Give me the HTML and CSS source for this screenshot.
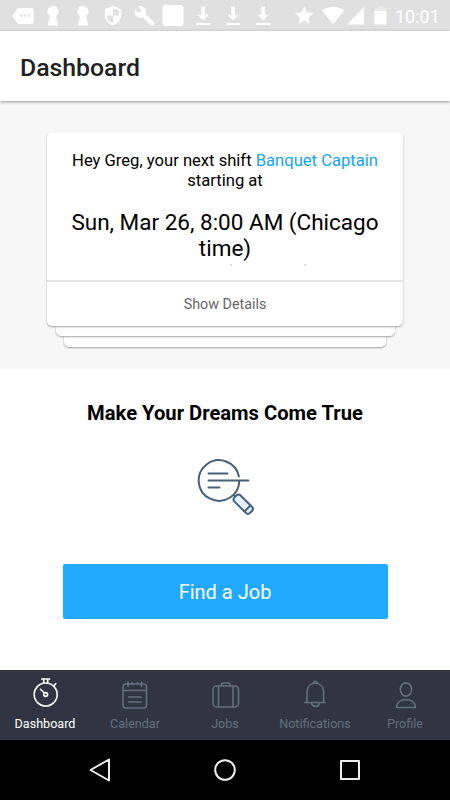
FILE: index.html
```html
<!DOCTYPE html>
<html lang="en">
<head>
  <meta charset="UTF-8">
  <meta name="viewport" content="width=device-width, initial-scale=1.0">
  <title>Dashboard</title>
  <link rel="stylesheet" href="styles.css">
</head>
<body>
  <div class="status-bar">
    <div class="status-left">
      <svg viewBox="0 0 30 31"><path fill-rule="evenodd" d="M11 8h13q1.500 0 1.500 1.500v13q0 1.500-1.500 1.500H11q-1 0-1.700-1L4.500 16l4.800-7q.7-1 1.700-1zM12 14.500v2.200h2.200v-2.200zM15.800 14.500v2.200h2.200v-2.200zM19.600 14.500v2.200h2.200v-2.200z"/></svg>
      <svg viewBox="0 0 30 31"><path d="M15 6a5.400 5.400 0 0 1 3 9.900L20.200 25.500H9.600L12 15.900A5.400 5.400 0 0 1 15 6z"/></svg>
      <svg viewBox="0 0 30 31"><path d="M15 6a5.400 5.400 0 0 1 3 9.900L20.200 25.500H9.600L12 15.900A5.400 5.400 0 0 1 15 6z"/></svg>
      <svg viewBox="0 0 30 31"><path fill-rule="evenodd" d="M15 6l8.200 3v6c0 5-3.400 8.900-8.200 10.300C10.200 23.900 6.800 20 6.800 15V9zM15 8.300v7.200H8.800c.3 3.800 2.700 6.700 6.200 7.700v-7.700h6.200v-5z"/></svg>
      <svg viewBox="0 0 30 31"><path d="M26.300 22.500l-8.500-8.500c.9-2.200.4-4.700-1.400-6.400-1.800-1.800-4.500-2.100-6.600-1.100l3.900 3.900-2.700 2.700-4-3.900c-1 2.200-.5 4.900 1.300 6.700 1.800 1.700 4.200 2.200 6.400 1.300l8.500 8.600c.4.400 1 .4 1.400 0l1.900-1.900c.4-.4.3-1.100-.2-1.400z"/></svg>
      <svg viewBox="0 0 30 31"><rect x="4.500" y="5" width="21" height="21" rx="3"/></svg>
      <svg viewBox="0 0 30 31"><path d="M13.300 6.500h3.600v8.300h3.800L15.100 20.500l-5.600-5.700h3.800zM8.300 23h14v2h-14z"/></svg>
      <svg viewBox="0 0 30 31"><path d="M13.300 6.500h3.600v8.300h3.800L15.100 20.500l-5.600-5.700h3.800zM8.300 23h14v2h-14z"/></svg>
      <svg viewBox="0 0 30 31"><path d="M13.300 6.500h3.600v8.300h3.800L15.100 20.500l-5.600-5.700h3.800zM8.300 23h14v2h-14z"/></svg>
    </div>
    <svg class="status-right" viewBox="0 0 100 31">
      <path d="M14.200 6.300l2.600 6.100 6.600.6-5 4.400 1.500 6.500-5.700-3.500-5.700 3.500L10 17.400 5 13l6.600-.6z"/>
      <path d="M32 10.500c6.500-4.900 15.700-4.900 22.200 0L43.100 24.300z"/>
      <path d="M74 7v17.500H57z"/>
      <path fill-opacity=".35" d="M84.500 11V8h3V6.300h6V8h3v3z"/>
      <path d="M84.500 11h12v12.500q0 1-1 1h-10q-1 0-1-1z"/>
    </svg>
    <span class="clock">10:01</span>
  </div>

  <header class="header">
    <h1>Dashboard</h1>
  </header>

  <section class="shifts">
    <div class="card">
      <div class="card-body">
        <p class="greeting">Hey Greg, your next shift <a>Banquet Captain</a><br>starting at</p>
        <p class="shift-time">Sun, Mar 26, 8:00 AM (Chicago<br>time)</p>
        <svg class="clipped" viewBox="0 0 356 4"><path d="M183 2.500l2-1M257 2.500l2-1"/></svg>
      </div>
      <div class="card-footer">Show Details</div>
    </div>
    <div class="card-edge"></div>
    <div class="card-edge last"></div>
  </section>

  <main class="find">
    <h2>Make Your Dreams Come True</h2>
    <svg class="search-icon" viewBox="0 0 60 60">
      <path d="M43.900 18.500A20.300 20.300 0 1 0 44.300 22.500M13.500 15.500h19M13.500 22.500h40M13.500 29.500h11M38.500 37l3.500 3.500"/>
      <g transform="translate(48.200 46.200) rotate(45)">
        <rect class="handle" x="-11" y="-4.300" width="22" height="8.600" rx="3"/>
        <path d="M6-4v8"/>
      </g>
    </svg>
    <button class="find-button">Find a Job</button>
  </main>

  <nav class="tabs">
    <div class="tab active">
      <svg viewBox="0 0 40 34"><circle cx="20.700" cy="19.500" r="11.500"/><path d="M16.700 4h8M18.700 4v4M22.700 4v4M28.700 11l2-2.300M15.500 14.300l4 4"/><circle cx="20.700" cy="19.500" r="1.900"/></svg>
      <span>Dashboard</span>
    </div>
    <div class="tab">
      <svg viewBox="0 0 40 34"><rect x="8" y="9" width="23.500" height="24" rx="3"/><path d="M8 15.500h23.500M13 7v4.500M26.500 7v4.500M17 9V7.500M22.500 9V7.500M13.500 22h12.500M13.500 27h12.500"/></svg>
      <span>Calendar</span>
    </div>
    <div class="tab">
      <svg viewBox="0 0 40 34"><rect x="8" y="11" width="25.500" height="21" rx="3.500"/><path d="M13.500 11v21M28 11v21M16.500 11V9.500q0-1.500 1.500-1.500h5.500q1.500 0 1.500 1.500V11"/></svg>
      <span>Jobs</span>
    </div>
    <div class="tab">
      <svg viewBox="0 0 40 34"><path d="M9.500 27.500h21M12 27.500V17c0-5.500 3.500-8.700 8.300-8.700s8.300 3.200 8.300 8.700v10.500M18.300 8.300c0-2.400 4-2.400 4 0M16.500 28c1 4.500 7 4.500 8 0"/></svg>
      <span>Notifications</span>
    </div>
    <div class="tab">
      <svg viewBox="0 0 40 34"><ellipse cx="21" cy="14.500" rx="5.600" ry="6.600"/><path d="M11.700 32.500v-1.500c1.300-8.500 17.300-8.500 18.600 0v1.500z"/></svg>
      <span>Profile</span>
    </div>
  </nav>

  <div class="system-nav">
    <svg viewBox="0 0 30 30"><path d="M24 4.500v21L5.500 15z"/></svg>
    <svg viewBox="0 0 30 30"><circle cx="15" cy="15" r="9.800"/></svg>
    <svg viewBox="0 0 30 30"><rect x="6" y="6" width="18" height="18"/></svg>
  </div>
</body>
</html>
```
FILE: styles.css
```css
* {
  box-sizing: border-box;
}

body {
  width: 450px;
  height: 800px;
  margin: 0;
  display: flex;
  flex-direction: column;
  overflow: hidden;
  font-family: Roboto, sans-serif;
  color: #000;
  background-color: #fff;
}

h1, h2, p {
  margin: 0;
}

svg {
  display: block;
  flex: none;
}

.status-bar {
  display: flex;
  height: 31px;
  padding-left: 7.500px;
  background-color: #e0e0e0;
  fill: #fff;
}

.status-left {
  display: flex;
}

.status-left svg {
  width: 30px;
  height: 31px;
}

.status-right {
  width: 100px;
  height: 31px;
  margin-left: 12.500px;
}

.clock {
  margin-left: 5px;
  font-size: 18px;
  line-height: 33px;
  color: #fff;
}

.header {
  position: relative;
  height: 70px;
  padding-left: 20px;
  background-color: #fff;
  box-shadow: 0 1px 3px rgba(0, 0, 0, 0.4);
}

.header h1 {
  font-size: 24.800px;
  font-weight: 500;
  line-height: 73px;
  color: #212121;
}

.shifts {
  display: flex;
  flex-direction: column;
  align-items: center;
  height: 268px;
  padding-top: 31px;
  background-color: #f7f7f7;
}

.card {
  width: 356px;
  height: 194px;
  border-radius: 5px;
  background-color: #fff;
  box-shadow: 0 1px 2px rgba(0, 0, 0, 0.35);
  z-index: 2;
}

.card-body {
  height: 150px;
  padding-top: 19px;
  border-bottom: 2px solid #e3e3e3;
  text-align: center;
}

.greeting {
  font-size: 16.600px;
  line-height: 20px;
}

.greeting a {
  color: #12a5f9;
}

.shift-time {
  margin-top: 18px;
  font-size: 22.500px;
  line-height: 26px;
}

.clipped {
  width: 356px;
  height: 4px;
  margin-top: 2px;
  stroke: #bbb;
}

.card-footer {
  font-size: 14.300px;
  line-height: 45px;
  text-align: center;
  color: #666;
}

.card-edge {
  width: 339px;
  height: 10px;
  border-radius: 0 0 5px 5px;
  background-color: #fff;
  box-shadow: 0 1px 2px rgba(0, 0, 0, 0.35);
  z-index: 1;
}

.card-edge.last {
  width: 322px;
  height: 11px;
  z-index: 0;
}

.find {
  display: flex;
  flex-direction: column;
  align-items: center;
  height: 301px;
  padding-top: 32px;
}

.find h2 {
  font-size: 20.200px;
  font-weight: 700;
  line-height: 24px;
}

.search-icon {
  width: 60px;
  height: 60px;
  margin-top: 33px;
  fill: none;
  stroke: #466078;
  stroke-width: 2;
  stroke-linecap: round;
}

.search-icon .handle {
  fill: #e3effc;
}

.find-button {
  width: 325px;
  height: 55px;
  margin-top: 46px;
  padding: 1px 0 0;
  border: 0;
  border-radius: 2px;
  font-family: inherit;
  font-size: 20px;
  color: #fff;
  background-color: #21a9ff;
}

.tabs {
  display: flex;
  height: 70px;
  background-color: #313541;
}

.tab {
  width: 90px;
  display: flex;
  flex-direction: column;
  align-items: center;
  padding-top: 5px;
  font-size: 12.600px;
  line-height: 16px;
  color: #62707d;
}

.tab svg {
  width: 40px;
  height: 34px;
  margin-bottom: 7px;
  fill: none;
  stroke: currentColor;
  stroke-width: 1.600;
  stroke-linecap: round;
  stroke-linejoin: round;
}

.tab.active {
  color: #fff;
}

.system-nav {
  display: flex;
  justify-content: center;
  align-items: center;
  gap: 95px;
  height: 60px;
  background-color: #000;
}

.system-nav svg {
  width: 30px;
  height: 30px;
  fill: none;
  stroke: #eee;
  stroke-width: 2;
  stroke-linejoin: round;
}
```
